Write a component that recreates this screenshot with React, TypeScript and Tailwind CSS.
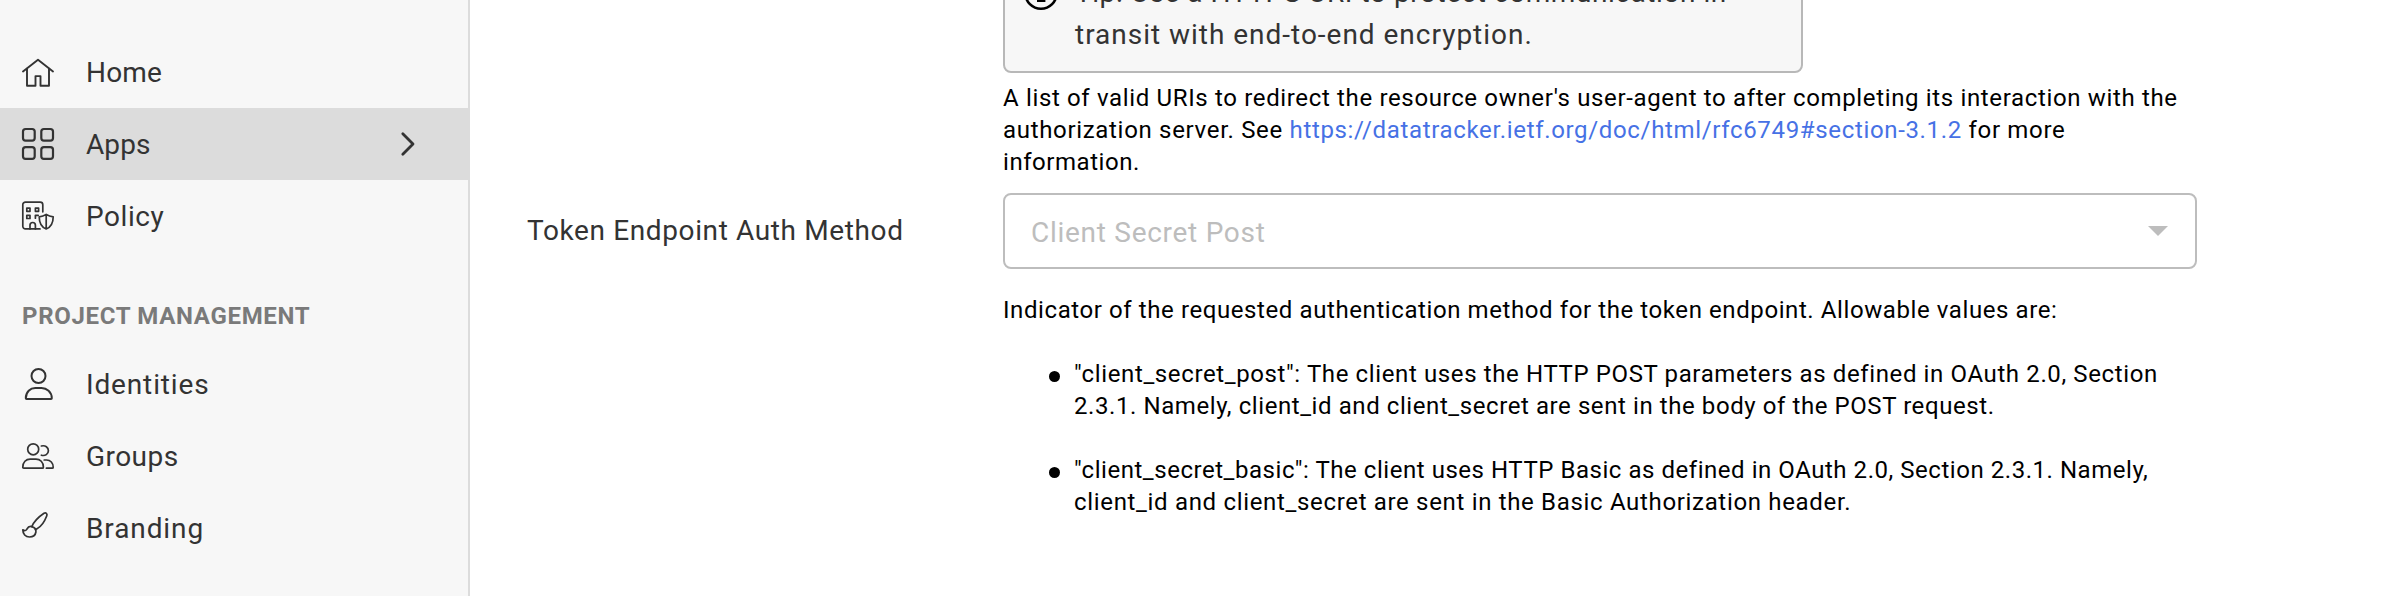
import type { ReactNode } from "react";

function Icon({ sw, children }: { sw: number; children: ReactNode }) {
  return (
    <svg
      viewBox="0 0 32 32"
      className="size-8 shrink-0 overflow-visible"
      fill="none"
      stroke="currentColor"
      strokeWidth={sw}
      strokeLinecap="round"
      strokeLinejoin="round"
    >
      {children}
    </svg>
  );
}

const HomeIcon = () => (
  <Icon sw={1.9}>
    <path d="M1 15.4 16 3.8l15 11.6" />
    <path d="M5 12.6v17.1h8.5v-9.6h5v9.6H27V12.6" />
  </Icon>
);

const AppsIcon = () => (
  <Icon sw={2.2}>
    <rect x="1" y="1" width="11.7" height="11.7" rx="2.6" />
    <rect x="19.3" y="1" width="11.7" height="11.7" rx="2.6" />
    <rect x="1" y="19.2" width="11.7" height="11.7" rx="2.6" />
    <rect x="19.3" y="19.2" width="11.7" height="11.7" rx="2.6" />
  </Icon>
);

const PolicyIcon = () => (
  <Icon sw={1.7}>
    <path d="M20.8 11.8V4.7a2.6 2.6 0 0 0-2.6-2.6H3.4A2.6 2.6 0 0 0 .8 4.7v21.6a2.6 2.6 0 0 0 2.6 2.6H18" />
    <rect x="4.8" y="8.1" width="3.2" height="3.2" />
    <rect x="13.4" y="8.1" width="3.2" height="3.2" />
    <rect x="4.8" y="15.3" width="3.2" height="3.2" />
    <path d="M13.4 18.2v-2.9h2.8M8 28.9v-3.7a2.7 2.7 0 0 1 5.4 0v3.7" />
    <path d="M24.2 14.4c1.9 1.3 4.3 2.2 7 2.4 0 6.2-1.7 10.2-7 12.2-5.3-2-7-6-7-12.2 2.7-.2 5.1-1.1 7-2.4zV29" />
  </Icon>
);

const PersonIcon = () => (
  <Icon sw={2}>
    <circle cx="16.5" cy="8" r="7" />
    <path d="M3.8 30.2C3.8 24 8.3 20 13.3 20h6.3c5 0 10.2 4 10.2 10.2q0 .8-.8.8H4.6q-.8 0-.8-.8z" />
  </Icon>
);

const GroupIcon = () => (
  <Icon sw={1.7}>
    <circle cx="11.2" cy="9.3" r="5.5" />
    <path d="M19.4 6c4-1 7 1.4 7 4.7s-3.2 5.6-7 4.5" />
    <path d="M.8 27.2c0-5 3.2-8.1 7.4-8.1h5.8c4.2 0 7.4 3.1 7.4 8.1q0 1-1 1H1.8q-1 0-1-1z" />
    <path d="M22.2 20h2.4c3.8 0 6.6 3 6.6 7.2q0 1-1 1h-5.8" />
  </Icon>
);

const BrushIcon = () => (
  <Icon sw={1.7}>
    <path d="M.8 17.8c1.7 1.2 3.5.9 4.2-.8 1-2 3-2.8 4.8-2.4 2.7.7 4.4 2.9 4.1 5.4-.5 3.3-3.1 5-6.4 5-4 0-6.7-3-6.7-7.2z" />
    <path d="M9.8 14.6C12 9.5 18 4 22 1.3c1.8-1.1 3.6.3 2.8 2.5-1.8 4.7-5.3 10.7-9.8 13q-.8.5-1.7.8" />
  </Icon>
);

function NavItem({
  icon,
  label,
  tracking,
  active = false,
}: {
  icon: ReactNode;
  label: string;
  tracking: string;
  active?: boolean;
}) {
  return (
    <a
      className={`flex h-[72px] items-center pl-[22px] pr-[54px] text-[28px] leading-9 text-[#333333] ${
        active ? "bg-[#dcdcdc]" : ""
      }`}
    >
      {icon}
      <span className={`ml-8 pt-0.5 ${tracking}`}>{label}</span>
      {active && (
        <svg
          viewBox="0 0 16 26"
          className="ml-auto h-[26px] w-4"
          fill="none"
          stroke="currentColor"
          strokeWidth="2.8"
          strokeLinecap="round"
          strokeLinejoin="round"
        >
          <path d="M2.8 2.7 13 13 2.8 23.2" />
        </svg>
      )}
    </a>
  );
}

function Sidebar() {
  return (
    <nav className="w-[470px] shrink-0 border-r-2 border-[#dcdcdc] bg-[#f7f7f7] pt-9">
      <NavItem icon={<HomeIcon />} label="Home" tracking="tracking-[0.2px]" />
      <div className="-mr-0.5">
        <NavItem icon={<AppsIcon />} label="Apps" tracking="tracking-[0.1px]" active />
      </div>
      <NavItem icon={<PolicyIcon />} label="Policy" tracking="tracking-[0.55px]" />
      <h2 className="mt-12 mb-[15px] h-[33px] pl-[22px] text-2xl leading-[33px] font-bold tracking-[0.68px] text-[#7a7a7a]">
        PROJECT MANAGEMENT
      </h2>
      <NavItem icon={<PersonIcon />} label="Identities" tracking="tracking-[0.85px]" />
      <NavItem icon={<GroupIcon />} label="Groups" tracking="tracking-[0.45px]" />
      <NavItem icon={<BrushIcon />} label="Branding" tracking="tracking-[0.9px]" />
    </nav>
  );
}

function Line({ tracking, children }: { tracking: string; children: ReactNode }) {
  return <span className={`block ${tracking}`}>{children}</span>;
}

function Bullet({ children }: { children: ReactNode }) {
  return (
    <li className="flex pl-[46px]">
      <span className="mt-[13px] h-[11px] w-[11px] shrink-0 rounded-full bg-black" />
      <div className="ml-[14px]">{children}</div>
    </li>
  );
}

function Tip() {
  return (
    <div className="-mt-[47px] flex h-[120px] w-[800px] rounded-lg border-2 border-[#b8b8b8] bg-[#f7f7f7] pl-[18px] pt-[17px]">
      <svg viewBox="0 0 36 36" className="mt-[3px] size-9 shrink-0" fill="none" stroke="#000" strokeWidth="2.6">
        <circle cx="18" cy="18" r="15.7" />
        <path d="M14.5 15.5h4v10M14 25.7h8.4" />
        <circle cx="18" cy="10.5" r="1" fill="#000" />
      </svg>
      <p className="ml-4 text-[28px] leading-[42px] text-[#333333]">
        <Line tracking="tracking-[0.55px]">Tip: Use a HTTPS URI to protect communication in</Line>
        <Line tracking="tracking-[0.98px]">transit with end-to-end encryption.</Line>
      </p>
    </div>
  );
}

export default function App() {
  return (
    <div className="flex h-[596px] w-[2406px] overflow-hidden bg-white font-[Roboto,sans-serif] whitespace-nowrap text-black">
      <Sidebar />
      <main className="grid grow grid-cols-[476px_1194px] content-start pl-[57px] text-2xl leading-8">
        <div className="col-start-2">
          <Tip />
          <p className="mt-[9px]">
            <Line tracking="tracking-[0.65px]">
              A list of valid URIs to redirect the resource owner's user-agent to after completing its interaction with the
            </Line>
            <Line tracking="tracking-[0.68px]">
              authorization server. See{" "}
              <a className="tracking-[0.66px] text-[#4671e5]">
                https://datatracker.ietf.org/doc/html/rfc6749#section-3.1.2
              </a>{" "}
              for more
            </Line>
            <Line tracking="tracking-[0.55px]">information.</Line>
          </p>
        </div>
        <label className="mt-[15px] h-[75px] text-[28px] leading-[75px] tracking-[0.62px] text-[#333333]">
          Token Endpoint Auth Method
        </label>
        <div className="mt-[15px]">
          <div className="flex h-[76px] items-center justify-between rounded-lg border-2 border-[#bdbdbd] pl-[26px] pr-[27px] text-[28px] leading-9 text-[#bdbdbd]">
            <span className="pt-[3px] tracking-[0.72px]">Client Secret Post</span>
            <svg viewBox="0 0 20 10" className="h-2.5 w-5" fill="currentColor">
              <path d="M0 0h20L10 10z" />
            </svg>
          </div>
          <p className="mt-[25px]">
            <Line tracking="tracking-[0.59px]">
              Indicator of the requested authentication method for the token endpoint. Allowable values are:
            </Line>
          </p>
          <ul className="mt-8 flex flex-col gap-8">
            <Bullet>
              <Line tracking="tracking-[0.62px]">
                "client_secret_post": The client uses the HTTP POST parameters as defined in OAuth 2.0, Section
              </Line>
              <Line tracking="tracking-[0.58px]">
                2.3.1. Namely, client_id and client_secret are sent in the body of the POST request.
              </Line>
            </Bullet>
            <Bullet>
              <Line tracking="tracking-[0.54px]">
                "client_secret_basic": The client uses HTTP Basic as defined in OAuth 2.0, Section 2.3.1. Namely,
              </Line>
              <Line tracking="tracking-[0.67px]">
                client_id and client_secret are sent in the Basic Authorization header.
              </Line>
            </Bullet>
          </ul>
        </div>
      </main>
    </div>
  );
}
